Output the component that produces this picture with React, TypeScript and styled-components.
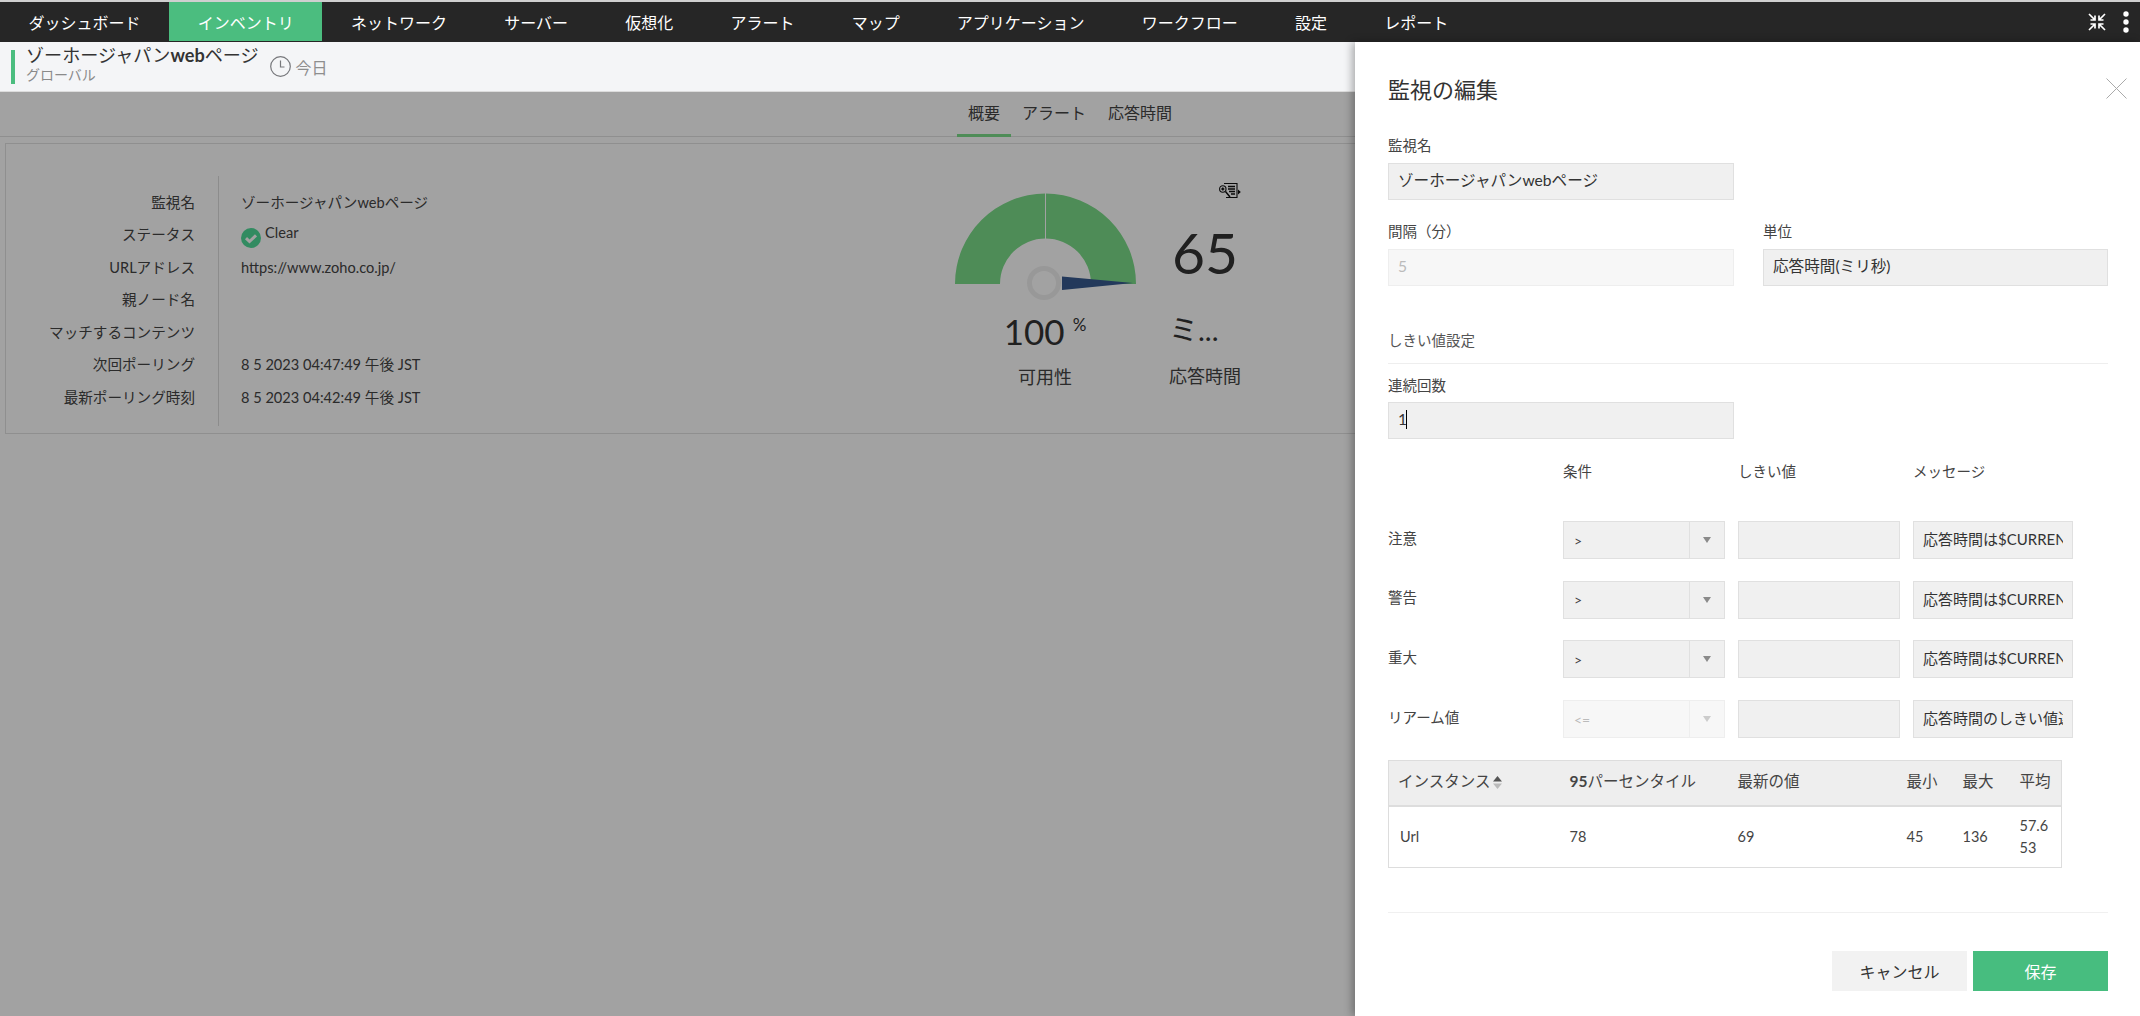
import React from "react";
import styled, { createGlobalStyle } from "styled-components";

const Global = createGlobalStyle`
  html, body { margin: 0; padding: 0; height: 100%; background: #fff; }
  #root { height: 100%; }
  * { box-sizing: border-box; }
  body { font-family: Lato, "Noto Sans CJK JP", "Liberation Sans", sans-serif; color: #444; overflow: hidden; }
`;

const Page = styled.div`
  position: relative; width: 2140px; height: 1016px; display: flex; flex-direction: column; overflow: hidden;
`;
const Nav = styled.nav`
  height: 42px; flex: none; display: flex; align-items: stretch; background: #262626;
  border-top: 2px solid #cfcfcf; padding-bottom: 1px;
`;
const NavItem = styled.a<{ $active?: boolean }>`
  display: flex; align-items: center; padding: 0 28.6px; font-size: 16px; color: #fff;
  background: ${(p) => (p.$active ? "#4bbd7f" : "transparent")};
`;
const NavTools = styled.div`
  margin-left: auto; display: flex; align-items: center; gap: 17px; padding-right: 11px;
`;
const SubHeader = styled.header`
  height: 50px; flex: none; display: flex; align-items: center; background: #f4f5f7;
  border-bottom: 1px solid #dcdcdc; padding-left: 11px;
`;
const TitleBlock = styled.div`
  border-left: 4px solid #4bbd7f; height: 34px; padding-left: 11px; display: flex; flex-direction: column;
  justify-content: center;
`;
const PageTitle = styled.div`
  font-size: 18.1px; line-height: 20px; color: #333; margin-top: -4px;
`;
const Bold = styled.b`
  font-weight: 700;
`;
const Scope = styled.div`
  font-size: 14px; line-height: 18px; color: #8a8a8a; margin-top: 1px;
`;
const Period = styled.div`
  display: flex; align-items: center; gap: 5px; margin-left: 11px; font-size: 16px; color: #8e8e8e; margin-top: 0;
`;
const Main = styled.main`
  position: relative; flex: 1; background: #fff;
`;
const Tabs = styled.div`
  height: 45px; display: flex; justify-content: center; border-bottom: 1px solid #e2e2e2;
`;
const Tab = styled.a<{ $active?: boolean }>`
  height: 45px; padding: 0 11px 2px; display: flex; align-items: center; font-size: 16px; color: #444;
  border-bottom: 3px solid ${(p) => (p.$active ? "#7bdc89" : "transparent")};
`;
const Card = styled.section`
  margin: 6px 5px 0; height: 291px; border: 1px solid #e2e2e2; padding-top: 32px; display: flex; align-items: flex-start;
`;
const LabelColumn = styled.div`
  width: 213px; height: 250px; padding: 10.500px 23px 0 0; border-right: 1px solid #dcdcdc;
`;
const ValueColumn = styled.div`
  width: 726px; padding: 10.500px 0 0 22px;
`;
const InfoLine = styled.div<{ $right?: boolean }>`
  height: 32.5px; line-height: 32px; font-size: 14.6px; color: #444; white-space: nowrap; display: flex; align-items: center;
  justify-content: ${(p) => (p.$right ? "flex-end" : "flex-start")};
`;
const StatusIcon = styled.svg`
  margin-top: 5px;
`;
const StatusText = styled.span`
  margin: -4px 0 0 4px;
`;
const GaugeWidget = styled.div`
  width: 200px; display: flex; flex-direction: column; align-items: center;
`;
const BigValue = styled.div`
  margin-top: 10px; height: 40px; line-height: 40px; font-size: 35px; color: #333; display: flex;
`;
const Percent = styled.span`
  font-size: 17px; line-height: 17px; margin: 5px 0 0 8px;
`;
const MetricLabel = styled.div<{ $top?: number }>`
  margin-top: ${(p) => p.$top ?? 14}px; height: 24px; line-height: 24px; font-size: 18px; color: #444;
`;
const TimeWidget = styled.div`
  width: 120px; padding-top: 7px; display: flex; flex-direction: column; align-items: center;
`;
const ReportIcon = styled.svg`
  align-self: flex-end; margin-right: 24px; display: block;
`;
const Number65 = styled.div`
  margin-top: 23px; height: 60px; line-height: 60px; font-size: 57px; color: #333;
`;
const Unit = styled.div`
  align-self: flex-start; margin: 28px 0 0 24px; height: 40px; line-height: 40px; font-size: 29px; color: #333;
`;
const Overlay = styled.div`
  position: absolute; inset: 0; background: rgba(0, 0, 0, 0.365);
`;
const Drawer = styled.aside`
  position: absolute; top: 42px; right: 0; bottom: 0; width: 785px; background: #fff;
  box-shadow: -3px 0 8px rgba(0, 0, 0, 0.3); padding: 33px 32px 0 33px;
`;
const DrawerTitle = styled.h2`
  margin: 0; height: 30px; line-height: 30px; font-size: 22px; font-weight: 400; color: #333;
`;
const Close = styled.svg`
  position: absolute; top: 36px; right: 13px;
`;
const FieldLabel = styled.label<{ $top?: number; $gap?: number }>`
  display: block; margin: ${(p) => p.$top ?? 0}px 0 ${(p) => p.$gap ?? 7}px; height: 20px; line-height: 20px;
  font-size: 14.5px; color: #444;
`;
const Input = styled.div<{ $disabled?: boolean; $w?: number }>`
  width: ${(p) => p.$w ?? 346}px; height: 37px; line-height: 33px; padding: 0 9px; font-size: 15.6px; overflow: hidden; white-space: nowrap;
  background: ${(p) => (p.$disabled ? "#f7f7f7" : "#f0f0f0")};
  color: ${(p) => (p.$disabled ? "#bbb" : "#333")};
  border: 1px solid ${(p) => (p.$disabled ? "#eee" : "#e0e0e0")};
`;
const Caret = styled.span`
  display: inline-block; width: 1px; height: 19px; background: #000; vertical-align: -4px; margin-left: -1px;
`;
const TwoCol = styled.div`
  display: grid; grid-template-columns: 346px 345px; column-gap: 29px; margin-top: 22px;
`;
const SectionTitle = styled.div`
  margin-top: 45px; height: 33px; line-height: 20px; font-size: 14.5px; color: #555; border-bottom: 1px solid #eee;
`;
const ThresholdHead = styled.div`
  display: grid; grid-template-columns: repeat(3, 162px) 160px; column-gap: 13px; margin-top: 23px;
  height: 20px; line-height: 20px; font-size: 14.5px; color: #444;
`;
const ThresholdRows = styled.div`
  margin-top: 39px; display: grid; grid-auto-rows: 38px; row-gap: 21.7px;
`;
const ThresholdRow = styled.div`
  display: grid; grid-template-columns: repeat(3, 162px) 160px; column-gap: 13px; align-items: center;
  font-size: 14.5px; color: #444;
`;
const RowName = styled.span`
  margin-top: -6px;
`;
const Select = styled.div<{ $disabled?: boolean }>`
  height: 38px; display: flex; align-items: center; padding-left: 10px; font-size: 14px; position: relative;
  background: ${(p) => (p.$disabled ? "#f7f7f7" : "#f0f0f0")};
  color: ${(p) => (p.$disabled ? "#bbb" : "#444")};
  border: 1px solid ${(p) => (p.$disabled ? "#eee" : "#e0e0e0")};
`;
const SelectArrow = styled.span<{ $disabled?: boolean }>`
  margin-left: auto; width: 35px; height: 100%; display: flex; align-items: center; justify-content: center;
  border-left: 1px solid ${(p) => (p.$disabled ? "#eee" : "#e0e0e0")};
  &::after {
    content: ""; border: 4px solid transparent; border-bottom-width: 0; border-top: 6px solid ${(p) => (p.$disabled ? "#ccc" : "#8a8a8a")};
  }
`;
const Message = styled.div`
  height: 38px; line-height: 35px; padding: 0 9px; background: #f0f0f0; border: 1px solid #e0e0e0;
  font-size: 15px; color: #333; overflow: hidden; white-space: nowrap;
`;
const MessageClip = styled.div`
  overflow: hidden;
`;
const ThresholdInput = styled.div`
  height: 38px; background: #f0f0f0; border: 1px solid #e0e0e0;
`;
const Table = styled.table`
  margin-top: 21.500px; width: 674px; table-layout: fixed; border-collapse: collapse; border: 1px solid #ddd; font-size: 14.5px;
`;
const Th = styled.th<{ $w: number }>`
  width: ${(p) => p.$w}px; height: 46px; padding: 0 0 5px 9px; background: #eee; border-bottom: 2px solid #ddd;
  text-align: left; font-weight: 400; font-size: 15.5px; color: #444; white-space: nowrap;
`;
const Td = styled.td<{ $first?: boolean }>`
  height: 61px; padding: 0 9px 0 ${(p) => (p.$first ? 11 : 9)}px; line-height: 22px; color: #444; word-break: break-all;
`;
const SortIcon = styled.svg`
  margin-left: 3px; vertical-align: -2px;
`;
const Footer = styled.div`
  margin-top: 44px; border-top: 1px solid #f0f0f0; padding-top: 38px; display: flex; justify-content: flex-end; gap: 6px;
`;
const Button = styled.button<{ $primary?: boolean }>`
  width: 135px; height: 40px; border: 0; font: inherit; font-size: 16px; padding: 0;
  background: ${(p) => (p.$primary ? "#47bd7f" : "#f2f2f2")};
  color: ${(p) => (p.$primary ? "#fff" : "#333")};
`;

const navItems = ["ダッシュボード", "インベントリ", "ネットワーク", "サーバー", "仮想化", "アラート", "マップ", "アプリケーション", "ワークフロー", "設定", "レポート"];
const labels = ["監視名", "ステータス", "URLアドレス", "親ノード名", "マッチするコンテンツ", "次回ポーリング", "最新ポーリング時刻"];
const rows = [
  { name: "注意", op: ">", msg: "応答時間は$CURRENT_VALUE" },
  { name: "警告", op: ">", msg: "応答時間は$CURRENT_VALUE" },
  { name: "重大", op: ">", msg: "応答時間は$CURRENT_VALUE" },
  { name: "リアーム値", op: "<=", msg: "応答時間のしきい値違反", disabled: true },
];

const Compress = () => (
  <svg width="18" height="18" viewBox="0 0 18 18" fill="none" stroke="#fff" strokeWidth="1.7">
    <path d="M1 1l5.5 5.5M2.5 7H7V2.5M17 1l-5.5 5.5M15.5 7H11V2.5M1 17l5.5-5.5M2.5 11H7v4.500M17 17l-5.500-5.500M15.500 11H11v4.500" />
  </svg>
);
const Dots = () => (
  <svg width="6" height="22" viewBox="0 0 6 22" fill="#fff">
    <circle cx="3" cy="3" r="2.7" /><circle cx="3" cy="11" r="2.7" /><circle cx="3" cy="19" r="2.7" />
  </svg>
);
const Clock = () => (
  <svg width="21" height="21" viewBox="0 0 21 21" fill="none" stroke="#77787c" strokeWidth="1.2">
    <circle cx="10.500" cy="10.500" r="9.800" /><path d="M10.500 4.500v6.500h4" />
  </svg>
);
const Check = () => (
  <StatusIcon width="20" height="20" viewBox="0 0 20 20">
    <circle cx="10" cy="10" r="10" fill="#4fdb99" />
    <path d="M5 10.200l3.500 3.300L15 7.400" fill="none" stroke="#fff" strokeWidth="3" />
  </StatusIcon>
);
const Gauge = () => (
  <svg width="200" height="125" viewBox="0 0 200 125">
    <path d="M10 108a90.500 90.500 0 0 1 181 0h-45a45.500 45.500 0 0 0-91 0z" fill="#7bdc89" />
    <path d="M100.500 7v67" stroke="#fff" strokeWidth="1" />
    <circle cx="99" cy="107" r="14.500" fill="none" stroke="#f0f0f0" strokeWidth="5" />
    <path d="M117 100.500V114L188 107z" fill="#375a8f" />
  </svg>
);
const Report = () => (
  <ReportIcon width="22" height="16" viewBox="0 0 22 16" fill="none" stroke="#111" strokeWidth="1.100">
    <path d="M5 .500h13v14H7" /><path d="M9 3.500h7M9 6h7M10 8.500h6M12 11h4" strokeWidth="1.300" />
    <circle cx="3.800" cy="6" r="3.200" fill="#fff" /><path d="M2.300 6h3M3.800 4.500v3M6.500 8.500l4.500 5.500" strokeWidth="1.500" />
    <path d="M19 6.500l2.800 2.500-2.800 2.500z" fill="#111" stroke="none" />
  </ReportIcon>
);

export default function App() {
  return (
    <Page>
      <Global />
      <Nav>
        {navItems.map((n) => (
          <NavItem key={n} $active={n === "インベントリ"}>{n}</NavItem>
        ))}
        <NavTools><Compress /><Dots /></NavTools>
      </Nav>
      <SubHeader>
        <TitleBlock>
          <PageTitle>ゾーホージャパン<Bold>web</Bold>ページ</PageTitle>
          <Scope>グローバル</Scope>
        </TitleBlock>
        <Period><Clock />今日</Period>
      </SubHeader>
      <Main>
        <Tabs>
          <Tab $active>概要</Tab>
          <Tab>アラート</Tab>
          <Tab>応答時間</Tab>
        </Tabs>
        <Card>
          <LabelColumn>
            {labels.map((l) => (
              <InfoLine key={l} $right>{l}</InfoLine>
            ))}
          </LabelColumn>
          <ValueColumn>
            <InfoLine>ゾーホージャパンwebページ</InfoLine>
            <InfoLine><Check /><StatusText>Clear</StatusText></InfoLine>
            <InfoLine>https://www.zoho.co.jp/</InfoLine>
            <InfoLine />
            <InfoLine />
            <InfoLine>8 5 2023 04:47:49 午後 JST</InfoLine>
            <InfoLine>8 5 2023 04:42:49 午後 JST</InfoLine>
          </ValueColumn>
          <GaugeWidget>
            <Gauge />
            <BigValue>100<Percent>%</Percent></BigValue>
            <MetricLabel>可用性</MetricLabel>
          </GaugeWidget>
          <TimeWidget>
            <Report />
            <Number65>65</Number65>
            <Unit>ミ...</Unit>
            <MetricLabel $top={14}>応答時間</MetricLabel>
          </TimeWidget>
        </Card>
        <Overlay />
      </Main>
      <Drawer>
        <DrawerTitle>監視の編集</DrawerTitle>
        <Close width="21" height="21" viewBox="0 0 21 21" stroke="#aaa" strokeWidth="1">
          <path d="M.5.500l20 20M20.500.500l-20 20" />
        </Close>
        <FieldLabel $top={31}>監視名</FieldLabel>
        <Input>ゾーホージャパンwebページ</Input>
        <TwoCol>
          <div>
            <FieldLabel>間隔（分）</FieldLabel>
            <Input $disabled>5</Input>
          </div>
          <div>
            <FieldLabel>単位</FieldLabel>
            <Input $w={345}>応答時間(ミリ秒)</Input>
          </div>
        </TwoCol>
        <SectionTitle>しきい値設定</SectionTitle>
        <FieldLabel $top={12} $gap={6}>連続回数</FieldLabel>
        <Input>1<Caret /></Input>
        <ThresholdHead>
          <span />
          <span>条件</span>
          <span>しきい値</span>
          <span>メッセージ</span>
        </ThresholdHead>
        <ThresholdRows>
          {rows.map((r) => (
            <ThresholdRow key={r.name}>
              <RowName>{r.name}</RowName>
              <Select $disabled={r.disabled}>{r.op}<SelectArrow $disabled={r.disabled} /></Select>
              <ThresholdInput />
              <Message><MessageClip>{r.msg}</MessageClip></Message>
            </ThresholdRow>
          ))}
        </ThresholdRows>
        <Table>
          <thead>
            <tr>
              <Th $w={172}>
                インスタンス
                <SortIcon width="9" height="13" viewBox="0 0 9 13">
                  <path d="M4.500 0L9 5.500H0z" fill="#555" /><path d="M0 7.500h9L4.500 13z" fill="#bbb" />
                </SortIcon>
              </Th>
              <Th $w={168}><Bold>95</Bold>パーセンタイル</Th>
              <Th $w={169}>最新の値</Th>
              <Th $w={56}>最小</Th>
              <Th $w={57}>最大</Th>
              <Th $w={51}>平均</Th>
            </tr>
          </thead>
          <tbody>
            <tr>
              <Td $first>Url</Td>
              <Td>78</Td>
              <Td>69</Td>
              <Td>45</Td>
              <Td>136</Td>
              <Td>57.653</Td>
            </tr>
          </tbody>
        </Table>
        <Footer>
          <Button>キャンセル</Button>
          <Button $primary>保存</Button>
        </Footer>
      </Drawer>
    </Page>
  );
}
